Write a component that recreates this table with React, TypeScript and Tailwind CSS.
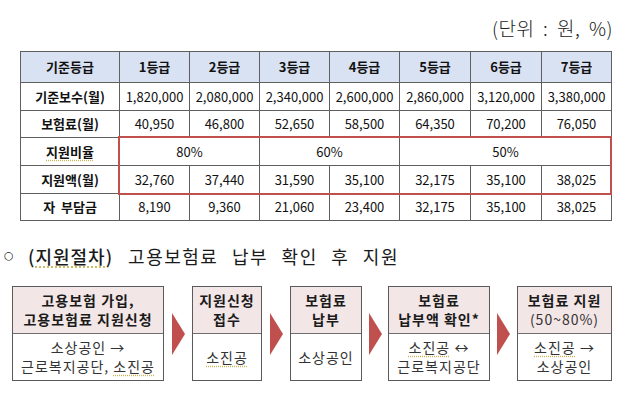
import React from 'react';

const FONT = "font-['Noto_Sans_CJK_KR','Noto_Sans',sans-serif]";
const RED = '#c0504d';

const cols = [99, 70, 70, 70, 70, 71, 71, 70];

const rows = [
  { label: '기준보수(월)', h: 'h-[28px]', cells: ['1,820,000', '2,080,000', '2,340,000', '2,600,000', '2,860,000', '3,120,000', '3,380,000'] },
  { label: '보험료(월)', h: 'h-[27px]', cells: ['40,950', '46,800', '52,650', '58,500', '64,350', '70,200', '76,050'] },
];

const aid = ['32,760', '37,440', '31,590', '35,100', '32,175', '35,100', '38,025'];
const self = ['8,190', '9,360', '21,060', '23,400', '32,175', '35,100', '38,025'];

const cell = 'border border-[#5f5f5f] text-center align-middle p-0';
const squiggle = 'underline decoration-dotted decoration-[#c9b458] underline-offset-[3px]';

const Arrow = ({ w }: { w: string }) => (
  <div className={`${w} flex items-center justify-center`}>
    <svg width="13" height="42" viewBox="0 0 13 42">
      <polygon points="0,0 13,21 0,42" fill={RED} />
    </svg>
  </div>
);

const Box = ({ w, head, body }: { w: string; head: React.ReactNode; body: React.ReactNode }) => (
  <div className={`${w} h-[95px] flex flex-col border border-[#5a5a5a] bg-white`}>
    <div className="h-[47px] flex items-center justify-center text-center bg-[#f3e6e6] border-b border-[#6f6f6f] font-bold text-[14px] leading-[19px] tracking-[1px] text-[#1a1a1a]">
      {head}
    </div>
    <div className="flex-1 flex items-center justify-center text-center text-[14px] leading-[19px] tracking-[1px] text-[#333]">
      {body}
    </div>
  </div>
);

export default function App() {
  return (
    <div className={`w-[628px] h-[402px] bg-white overflow-hidden flex flex-col ${FONT}`}>
      <div className="pt-[16px] pr-[15px] text-right text-[19px] leading-[24px] font-light text-[#222] tracking-[0.5px] [word-spacing:4px]">
        (단위 : 원, %)
      </div>

      <div className="relative mt-[11px] ml-[20px] w-[591px]">
        <table className="w-[591px] border-collapse table-fixed text-[13px] text-[#111]">
          <colgroup>
            {cols.map((c, i) => (
              <col key={i} style={{ width: c }} />
            ))}
          </colgroup>
          <tbody>
            <tr className="h-[31px] bg-[#d9e2f3] font-bold">
              <td className={cell}>기준등급</td>
              {[1, 2, 3, 4, 5, 6, 7].map((n) => (
                <td key={n} className={cell}>{n}등급</td>
              ))}
            </tr>
            {rows.map((r) => (
              <tr key={r.label} className={r.h}>
                <td className={`${cell} font-bold`}>{r.label}</td>
                {r.cells.map((v, i) => (
                  <td key={i} className={cell}>{v}</td>
                ))}
              </tr>
            ))}
            <tr className="h-[28px]">
              <td className={`${cell} font-bold`}>
                <span className={squiggle}>지원비율</span>
              </td>
              <td colSpan={2} className={cell}>80%</td>
              <td colSpan={2} className={cell}>60%</td>
              <td colSpan={3} className={cell}>50%</td>
            </tr>
            <tr className="h-[28px]">
              <td className={`${cell} font-bold`}>지원액(월)</td>
              {aid.map((v, i) => (
                <td key={i} className={cell}>{v}</td>
              ))}
            </tr>
            <tr className="h-[27px]">
              <td className={`${cell} font-bold whitespace-pre`}>자  부담금</td>
              {self.map((v, i) => (
                <td key={i} className={cell}>{v}</td>
              ))}
            </tr>
          </tbody>
        </table>
        {/* red highlight around 지원비율 / 지원액 */}
        <div className="absolute left-[98px] top-[85px] w-[494px] h-[59px] border-2 border-[#c0504d] pointer-events-none" />
      </div>

      <div className="mt-[23px] flex items-center h-[24px] text-[18px] leading-[24px] text-[#1a1a1a]">
        <span className="ml-[4px] w-[24px] font-['DejaVu_Sans',sans-serif] text-[11px]">○</span>
        <span className="font-medium tracking-[1px]">
          (<span className={squiggle}>지원절차</span>)
        </span>
        <span className="ml-[15px] tracking-[1.5px] [word-spacing:8px]">고용보험료 납부 확인 후 지원</span>
      </div>

      <div className="mt-[18px] ml-[12px] flex">
        <Box
          w="w-[152px]"
          head={<div>고용보험 가입,<br />고용보험료 지원신청</div>}
          body={<div>소상공인 →<br />근로복지공단, <span className={squiggle}>소진공</span></div>}
        />
        <Arrow w="w-[28px]" />
        <Box
          w="w-[70px]"
          head={<div>지원신청<br />접수</div>}
          body={<span className={squiggle}>소진공</span>}
        />
        <Arrow w="w-[28px]" />
        <Box w="w-[72px]" head={<div>보험료<br />납부</div>} body={<span>소상공인</span>} />
        <Arrow w="w-[26px]" />
        <Box
          w="w-[102px]"
          head={<div>보험료<br />납부액 확인*</div>}
          body={<div><span className={squiggle}>소진공</span> ↔<br />근로복지공단</div>}
        />
        <Arrow w="w-[27px]" />
        <Box
          w="w-[95px]"
          head={<div>보험료 지원<br /><span className="font-normal text-[#333]">(50~80%)</span></div>}
          body={<div><span className={squiggle}>소진공</span> →<br />소상공인</div>}
        />
      </div>
    </div>
  );
}
